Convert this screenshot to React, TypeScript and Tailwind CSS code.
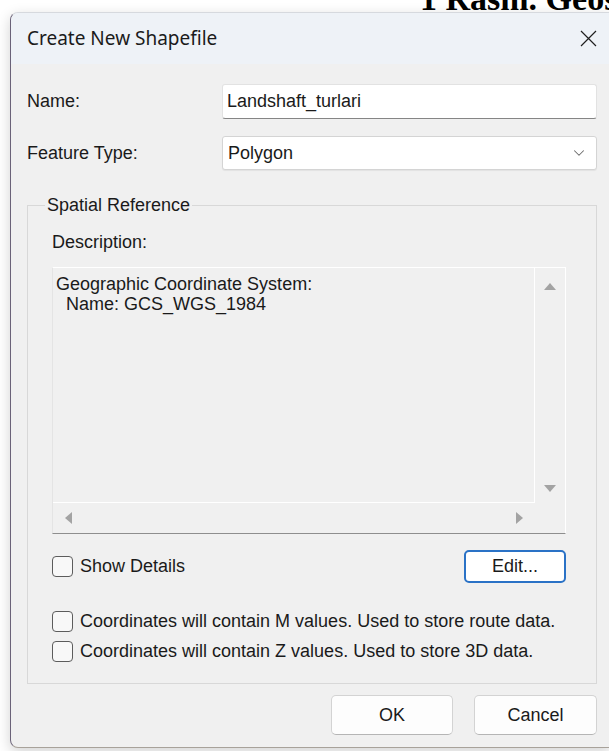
import { ChevronDown } from "lucide-react";

function CheckBox() {
  return (
    <span className="h-[21px] w-[21px] shrink-0 rounded-[4px] border border-[#5c5c5c] bg-[#f8f8f8]" />
  );
}

function Tri({ dir }: { dir: "up" | "down" | "left" | "right" }) {
  const pts = {
    up: "0,8 6,1 12,8",
    down: "0,1 6,8 12,1",
    left: "8,0 1,6 8,12",
    right: "1,0 8,6 1,12",
  }[dir];
  const vertical = dir === "up" || dir === "down";
  return (
    <svg
      width={vertical ? 12 : 9}
      height={vertical ? 9 : 12}
      viewBox={vertical ? "0 0 12 9" : "0 0 9 12"}
      className="block"
    >
      <polygon points={pts} fill="#a3a3a3" />
    </svg>
  );
}

function CloseGlyph() {
  return (
    <svg width="17" height="17" viewBox="0 0 17 17" className="block">
      <path d="M1 1L16 16M16 1L1 16" stroke="#1f1f1f" strokeWidth="1.2" />
    </svg>
  );
}

function PushButton({ label, width }: { label: string; width: string }) {
  return (
    <button
      className={`${width} h-[40px] rounded-[5px] border border-[#d3d3d3] border-b-[#b5b5b5] bg-[#fdfdfd] text-[18px] text-[#1a1a1a]`}
    >
      {label}
    </button>
  );
}

export default function App() {
  return (
    <div className="h-[751px] w-[609px] overflow-hidden bg-white font-['Liberation_Sans',Arial,sans-serif] text-[18px] text-[#1a1a1a]">
      {/* heading of the page behind the dialog */}
      <div className="h-[12px] overflow-hidden pl-[420px]">
        <div className="-mt-[18px] whitespace-nowrap font-['Liberation_Serif','Times_New_Roman',serif] text-[34px] font-bold leading-[34px] text-black">
          1 Rasm. Geos
        </div>
      </div>

      <div className="flex h-[739px]">
        <div className="w-[10px] shrink-0" />

        <div className="flex h-[736px] w-[600px] shrink-0 flex-col overflow-hidden rounded-l-[8px] border-l border-t border-b border-l-[#6a6278] border-t-[#d6d9de] border-b-[#a8a29a] bg-[#f0f0f0] shadow-[0_4px_14px_rgba(0,0,0,0.18)]">
          {/* title bar */}
          <div className="flex h-[51px] shrink-0 items-center justify-between bg-[#eef2f7] pl-[16px] pr-[13px]">
            <span className="font-['Noto_Sans','Open_Sans',sans-serif] text-[19px] text-[#1b1b1b]">
              Create New Shapefile
            </span>
            <CloseGlyph />
          </div>

          <div className="flex flex-1 flex-col pl-[16px]">
            {/* name */}
            <div className="mt-[20px] flex h-[35px] w-[570px] items-center">
              <span className="w-[195px]">Name:</span>
              <div className="flex h-full flex-1 items-center rounded-[3px] border border-[#e2e2e2] border-b-[#858585] bg-white pl-[4px]">
                Landshaft_turlari
              </div>
            </div>

            {/* feature type */}
            <div className="mt-[17px] flex h-[34px] w-[570px] items-center">
              <span className="w-[195px]">Feature Type:</span>
              <div className="flex h-full flex-1 items-center justify-between rounded-[3px] border border-[#d4d4d4] bg-white pl-[5px] pr-[8px] shadow-[0_1px_1px_rgba(0,0,0,0.06)]">
                <span>Polygon</span>
                <ChevronDown size={18} strokeWidth={1.4} className="text-[#6a6a6a]" />
              </div>
            </div>

            {/* spatial reference group */}
            <fieldset className="mt-[25px] w-[570px] border border-[#d8d8d8] pb-[21px]">
              <legend className="ml-[17px] px-[2px] leading-[21px]">Spatial Reference</legend>

              <div className="px-[24px]">
                <div className="mt-[16px] leading-[21px]">Description:</div>

                <div className="mt-[14px] grid h-[267px] w-[514px] grid-cols-[1fr_30px] grid-rows-[1fr_30px] border-l border-r border-t border-b border-l-[#e4e4e4] border-r-white border-t-white border-b-[#8e8e8e]">
                  <div className="border-b border-r border-white pl-[3px] pt-[6px] leading-[20px]">
                    <div>Geographic Coordinate System:</div>
                    <div className="whitespace-pre">{"  Name: GCS_WGS_1984"}</div>
                  </div>
                  <div className="flex flex-col items-center justify-between pb-[10px] pt-[14px]">
                    <Tri dir="up" />
                    <Tri dir="down" />
                  </div>
                  <div className="flex items-center justify-between pl-[11px] pr-[11px]">
                    <Tri dir="left" />
                    <Tri dir="right" />
                  </div>
                  <div />
                </div>

                <div className="mt-[16px] flex h-[33px] w-[514px] items-center justify-between">
                  <div className="flex items-center gap-[7px]">
                    <CheckBox />
                    <span>Show Details</span>
                  </div>
                  <button className="h-[33px] w-[102px] rounded-[5px] border-2 border-[#2a72c6] bg-white text-[18px]">
                    Edit...
                  </button>
                </div>

                <div className="mt-[28px] flex h-[21px] items-center gap-[7px]">
                  <CheckBox />
                  <span>Coordinates will contain M values. Used to store route data.</span>
                </div>
                <div className="mt-[9px] flex h-[21px] items-center gap-[7px]">
                  <CheckBox />
                  <span>Coordinates will contain Z values. Used to store 3D data.</span>
                </div>
              </div>
            </fieldset>

            {/* dialog buttons */}
            <div className="mt-[11px] flex w-[570px] justify-end gap-[21px]">
              <PushButton label="OK" width="w-[122px]" />
              <PushButton label="Cancel" width="w-[123px]" />
            </div>
          </div>
        </div>
      </div>
    </div>
  );
}
